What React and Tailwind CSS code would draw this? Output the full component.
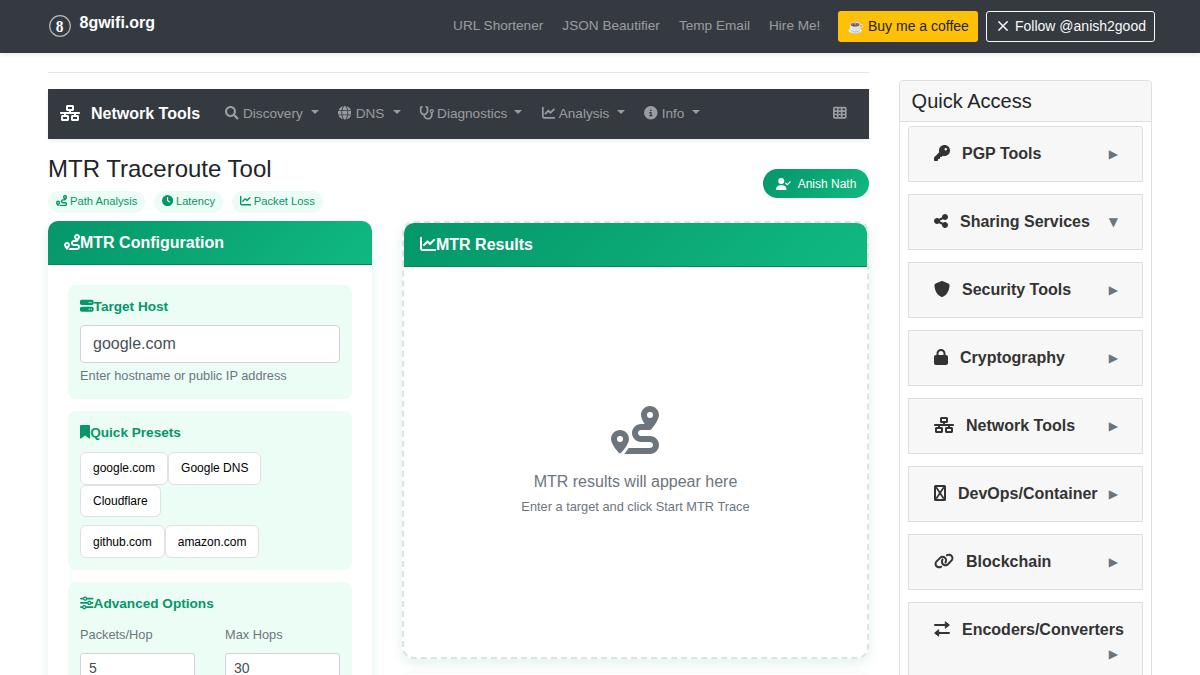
import { useState } from 'react';
import { FaSearch } from 'react-icons/fa';
import {
  FaNetworkWired,
  FaGlobe,
  FaStethoscope,
  FaChartLine,
  FaCircleInfo,
  FaTableCells,
  FaUserCheck,
  FaRoute,
  FaClock,
  FaServer,
  FaBookmark,
  FaSliders,
  FaKey,
  FaShareNodes,
  FaShield,
  FaLock,
  FaLink,
} from 'react-icons/fa6';

const topLinks = ['URL Shortener', 'JSON Beautifier', 'Temp Email', 'Hire Me!'];

const navItems = [
  { label: 'Discovery', icon: FaSearch, className: 'ml-[25px] gap-[4.4px]', iconClass: 'w-[13.6px]' },
  { label: 'DNS', icon: FaGlobe, className: 'ml-[18.6px] gap-[4.4px]', iconClass: 'w-[13.6px]' },
  { label: 'Diagnostics', icon: FaStethoscope, className: 'ml-[18px] gap-[3px]', iconClass: 'w-[15.3px]' },
  { label: 'Analysis', icon: FaChartLine, className: 'ml-[19.4px] gap-[3.4px]', iconClass: 'w-[13.6px]' },
  { label: 'Info', icon: FaCircleInfo, className: 'ml-[19.4px] gap-1', iconClass: 'w-[13.6px]' },
];

const badges = [
  { label: 'Path Analysis', icon: FaRoute },
  { label: 'Latency', icon: FaClock },
  { label: 'Packet Loss', icon: FaChartLine },
];

// Placeholder glyph for the container category
const BoxIcon = ({ className }) => (
  <svg viewBox="0 0 12 16" className={className} fill="none" stroke="currentColor">
    <rect x="1" y="1" width="10" height="14" rx="0.6" strokeWidth="2" />
    <path d="M2.2 2.2 L9.8 13.8 M9.8 2.2 L2.2 13.8" strokeWidth="1.7" />
  </svg>
);

const ExchangeIcon = ({ className }) => (
  <svg viewBox="0 0 16 16" className={className} fill="currentColor" stroke="currentColor" strokeLinecap="round" strokeLinejoin="round">
    <path d="M1 4 H11 M15 12 H5" strokeWidth="2" />
    <path d="M11.6 1 L15.4 4 L11.6 7 Z M4.4 9 L0.6 12 L4.4 15 Z" strokeWidth="1" />
  </svg>
);

const categories = [
  { label: 'PGP Tools', icon: FaKey, iconClass: 'w-4' },
  { label: 'Sharing Services', icon: FaShareNodes, iconClass: 'w-3.5', open: true },
  { label: 'Security Tools', icon: FaShield, iconClass: 'w-4' },
  { label: 'Cryptography', icon: FaLock, iconClass: 'w-3.5' },
  { label: 'Network Tools', icon: FaNetworkWired, iconClass: 'w-5' },
  { label: 'DevOps/Container', icon: BoxIcon, iconClass: 'w-3' },
  { label: 'Blockchain', icon: FaLink, iconClass: 'w-5' },
  { label: 'Encoders/Converters', icon: ExchangeIcon, iconClass: 'w-4' },
];

const presetRows = [
  [
    { label: 'google.com', host: 'google.com' },
    { label: 'Google DNS', host: '8.8.8.8' },
    { label: 'Cloudflare', host: '1.1.1.1' },
  ],
  [
    { label: 'github.com', host: 'github.com' },
    { label: 'amazon.com', host: 'amazon.com' },
  ],
];

const Caret = () => (
  <span className="ml-1 -mt-[3px] h-0 w-0 border-x-4 border-t-4 border-x-transparent border-t-current" />
);

const TopBar = () => (
  <header className="h-[53px] bg-[#343a40] shadow-[0_2px_4px_rgba(0,0,0,0.08)]">
    <div className="flex h-full items-center pl-12 pr-[45px]">
      <svg viewBox="0 0 24 24" className="-mt-px h-6 w-6">
        <circle cx="12" cy="12" r="10.3" fill="none" stroke="#b4b7ba" strokeWidth="1.2" />
        <g transform="translate(11.6 18) scale(0.88 1)">
          <text textAnchor="middle" fontSize="17.5" fontWeight="700" fill="#fff" className="font-['Liberation_Serif',serif]">8</text>
        </g>
      </svg>
      <span className="-mt-[7px] ml-[7.5px] text-base font-bold text-white">8gwifi.org</span>
      <nav className="ml-auto flex items-center gap-[19.1px] text-[13.6px] text-white/50">
        {topLinks.map((link) => (
          <a key={link} href="#" className="whitespace-nowrap">{link}</a>
        ))}
      </nav>
      <a href="#" className="ml-[17.6px] flex h-[31px] w-[140px] items-center justify-center whitespace-nowrap rounded-[3px] bg-[#ffc107] pb-0.5 text-sm text-[#212529]">
        ☕ Buy me a coffee
      </a>
      <a href="#" className="ml-2 flex h-[31px] w-[169px] items-center whitespace-nowrap rounded-[3px] border border-[#f8f9fa] pb-0.5 pl-[11px] text-sm text-[#f8f9fa]">
        <svg viewBox="0 0 10 10" className="mr-[7px] h-[10px] w-[10px]" stroke="currentColor" strokeWidth="1.5">
          <path d="M0.4 0.4 L9.6 9.6 M9.6 0.4 L0.4 9.6" />
        </svg>
        Follow @anish2good
      </a>
    </div>
  </header>
);

const NetworkNav = () => (
  <nav className="flex h-[50px] items-center bg-[#343a40] pl-3 pr-[22px] text-[13.6px] text-white/50 shadow-[0_2px_4px_rgba(0,0,0,0.08)]">
    <FaNetworkWired className="-mt-0.5 h-4 w-5 text-white" />
    <span className="ml-[11px] whitespace-nowrap text-base font-bold text-white">Network Tools</span>
    {navItems.map(({ label, icon: Icon, className, iconClass }) => (
      <a key={label} href="#" className={`flex items-center whitespace-nowrap ${className}`}>
        <Icon className={`-mt-0.5 h-[13.6px] ${iconClass}`} />
        <span>{label}</span>
        <Caret />
      </a>
    ))}
    <FaTableCells className="-mt-0.5 ml-auto h-[13.6px] w-[13.6px]" />
  </nav>
);

const CardHeader = ({ icon: Icon, title }) => (
  <div className="flex h-11 items-center rounded-t-[10px] border-b border-[#0a8159] bg-linear-135 from-[#059669] to-[#10b981] px-4 font-bold text-white">
    <Icon className="-mt-px h-4 w-4" />
    {title}
  </div>
);

const Section = ({ icon: Icon, iconClass = 'w-[13.6px]', title, children }) => (
  <section className="mb-3 rounded-lg bg-[#ecfdf5] p-3">
    <h2 className="mb-2 flex items-center text-[13.6px] font-bold leading-[20.4px] text-[#059669]">
      <Icon className={`-mt-0.5 h-[13.6px] ${iconClass}`} />
      {title}
    </h2>
    {children}
  </section>
);

const ConfigCard = () => {
  const [host, setHost] = useState('google.com');
  const [packets, setPackets] = useState('5');
  const [maxHops, setMaxHops] = useState('30');

  return (
    <div className="w-[324px] shrink-0 rounded-xl bg-white shadow-[0_4px_12px_rgba(5,150,105,0.12)]">
      <CardHeader icon={FaRoute} title="MTR Configuration" />
      <div className="p-5">
        <Section icon={FaServer} title="Target Host">
          <input
            value={host}
            onChange={(e) => setHost(e.target.value)}
            className="block h-[38px] w-full rounded border border-[#ced4da] bg-white px-3 text-base text-[#495057]"
          />
          <p className="mb-px mt-[3px] text-[12.8px] leading-[19.2px] text-[#6c757d]">Enter hostname or public IP address</p>
        </Section>

        <Section icon={FaBookmark} iconClass="w-[10.2px]" title="Quick Presets">
          <div className="flex flex-col gap-[8.4px] pt-px">
            {presetRows.map((row, i) => (
              <div key={i} className="flex flex-wrap">
                {row.map((preset) => (
                  <button
                    key={preset.label}
                    onClick={() => setHost(preset.host)}
                    className="h-[32.5px] rounded-md border border-[#dee2e6] bg-white px-3 text-xs text-black"
                  >
                    {preset.label}
                  </button>
                ))}
              </div>
            ))}
          </div>
        </Section>

        <Section icon={FaSliders} title="Advanced Options">
          <div className="grid grid-cols-2 gap-[30px] pt-[3px] text-[12.8px] leading-[19.2px] text-[#6c757d]">
            <label>
              Packets/Hop
              <input
                value={packets}
                onChange={(e) => setPackets(e.target.value)}
                className="mt-[8.5px] block h-[31px] w-full rounded-[3px] border border-[#ced4da] bg-white px-2 pb-0.5 text-sm text-[#495057]"
              />
            </label>
            <label>
              Max Hops
              <input
                value={maxHops}
                onChange={(e) => setMaxHops(e.target.value)}
                className="mt-[8.5px] block h-[31px] w-full rounded-[3px] border border-[#ced4da] bg-white px-2 pb-0.5 text-sm text-[#495057]"
              />
            </label>
          </div>
        </Section>
      </div>
    </div>
  );
};

const ResultsColumn = () => (
  <div className="ml-[30px] flex min-w-0 flex-1 flex-col gap-[14px]">
    <div className="flex h-[438px] shrink-0 flex-col rounded-xl border-2 border-dashed border-[#dee2e6] bg-white shadow-[0_4px_12px_rgba(5,150,105,0.12)]">
      <CardHeader icon={FaChartLine} title="MTR Results" />
      <div className="flex flex-1 flex-col items-center justify-center text-[#6c757d]">
        <FaRoute className="mr-px h-12 w-12" />
        <p className="mt-4 text-base leading-6">MTR results will appear here</p>
        <p className="mb-px mt-[3px] text-[12.8px] leading-[19.2px]">Enter a target and click Start MTR Trace</p>
      </div>
    </div>
    <div className="h-40 rounded-xl bg-white shadow-[0_4px_12px_rgba(5,150,105,0.12)]" />
  </div>
);

const QuickAccess = () => (
  <aside className="mt-[27px] w-[253px] shrink-0 rounded border border-[#dfdfdf] bg-white">
    <h2 className="flex h-[41px] items-center rounded-t border-b border-[#dfdfdf] bg-[#f7f7f7] pl-[11.6px] text-xl text-[#212529]">
      Quick Access
    </h2>
    <div className="flex flex-col gap-3 px-2 pt-1">
      {categories.map(({ label, icon: Icon, iconClass, open }) => (
        <div
          key={label}
          className="flex min-h-14 flex-wrap items-center border border-[#dfdfdf] bg-[#f7f7f7] py-[15px] pl-[25px] pr-6 first:rounded-t-[3px]"
        >
          <span className="flex items-center gap-3 whitespace-nowrap font-bold leading-6 text-[#333]">
            <Icon className={`-mt-0.5 h-4 ${iconClass}`} />
            {label}
          </span>
          <span className="ml-auto font-['DejaVu_Sans',sans-serif] text-xs leading-6 text-[#6c757d]">
            {open ? '▼' : '▶'}
          </span>
        </div>
      ))}
    </div>
  </aside>
);

const App = () => {
  return (
    <div className="h-[675px] overflow-hidden bg-white font-['Liberation_Sans',Arial,sans-serif] text-base text-[#212529]">
      <TopBar />
      <div className="flex px-12">
        <main className="w-[821px] shrink-0 pt-[19px]">
          <hr className="mb-4 border-t border-black/10" />
          <NetworkNav />

          <div className="mt-4 flex h-[66px] items-start justify-between">
            <div>
              <h1 className="text-2xl leading-[28.8px]">MTR Traceroute Tool</h1>
              <div className="mt-[7px] flex gap-[8.6px]">
                {badges.map(({ label, icon: Icon }) => (
                  <span key={label} className="flex h-[22px] items-center gap-[2.9px] whitespace-nowrap rounded-full bg-[#ecfdf5] px-2 text-[11.2px] text-[#059669]">
                    <Icon className="-mt-0.5 h-[11.2px] w-[11.2px]" />
                    {label}
                  </span>
                ))}
              </div>
            </div>
            <a href="#" className="mt-[14px] flex h-[29px] w-[106px] items-center justify-center gap-[7px] whitespace-nowrap rounded-full bg-linear-135 from-[#059669] to-[#10b981] text-xs text-white">
              <FaUserCheck className="h-3 w-[15px]" />
              Anish Nath
            </a>
          </div>

          <div className="flex items-start">
            <ConfigCard />
            <ResultsColumn />
          </div>
        </main>
        <div className="ml-[30px]">
          <QuickAccess />
        </div>
      </div>
    </div>
  );
};

export default App;
